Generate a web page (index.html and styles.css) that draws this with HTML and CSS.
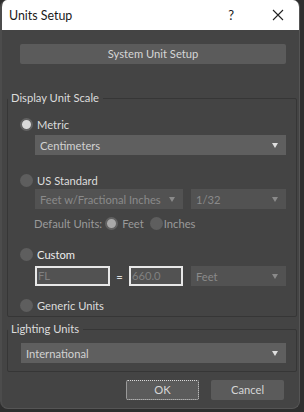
FILE: index.html
```html
<!DOCTYPE html>
<html>
<head>
<meta charset="utf-8">
<link rel="stylesheet" href="styles.css">
</head>
<body>
<div class="window">
  <div class="titlebar">
    <span class="title">Units Setup</span>
    <span class="help">?</span>
    <svg class="close" width="12" height="12" viewBox="0 0 12 12"><path d="M1 1 L11 11 M11 1 L1 11" stroke="#222" stroke-width="1.1" fill="none"/></svg>
  </div>
  <div class="content">
    <div class="sysrow"><div class="btn sysbtn">System Unit Setup</div></div>

    <fieldset class="group display">
      <legend>Display Unit Scale</legend>
      <div class="radiorow r-metric"><span class="radio on"></span><span class="rlabel">Metric</span></div>
      <div class="indent"><div class="combo wide cm"><span>Centimeters</span><i class="arrow"></i></div></div>

      <div class="radiorow r-us"><span class="radio"></span><span class="rlabel">US Standard</span></div>
      <div class="indent combos">
        <div class="combo dis feetfrac"><span>Feet w/Fractional Inches</span><i class="arrow"></i></div>
        <div class="combo dis frac"><span>1/32</span><i class="arrow"></i></div>
      </div>
      <div class="defunits">
        <span class="dlabel">Default Units:</span>
        <span class="radio on dim"></span><span class="dopt feetopt">Feet</span>
        <span class="radio"></span><span class="dopt inchopt">Inches</span>
      </div>

      <div class="radiorow r-custom"><span class="radio"></span><span class="rlabel bright">Custom</span></div>
      <div class="indent customrow">
        <div class="field fl">FL</div>
        <span class="eq">=</span>
        <div class="field val">660.0</div>
        <div class="combo dis feet"><span>Feet</span><i class="arrow"></i></div>
      </div>

      <div class="radiorow r-generic"><span class="radio"></span><span class="rlabel">Generic Units</span></div>
    </fieldset>

    <fieldset class="group lighting">
      <legend>Lighting Units</legend>
      <div class="combo wide light"><span>International</span><i class="arrow"></i></div>
    </fieldset>

    <div class="buttons">
      <div class="btn ok">OK</div>
      <div class="btn cancel">Cancel</div>
    </div>
  </div>
</div>
</body>
</html>
```

FILE: styles.css
```css
html, body {
  margin: 0;
  padding: 0;
}
body {
  width: 304px;
  height: 412px;
  background: #2e2e2e;
  font-family: Lato, "Noto Sans", sans-serif;
  font-size: 11.2px;
  overflow: hidden;
}
.window {
  width: 300px;
  height: 409px;
  background: #444444;
  border-radius: 7px 7px 8px 8px;
  overflow: hidden;
  box-sizing: border-box;
  border-left: 2px solid #4c4c4c;
  border-right: 1px solid #555;
  border-bottom: 1px solid #555;
}
.titlebar {
  height: 30px;
  background: #ffffff;
  display: flex;
  align-items: center;
  color: #1a1a1a;
  margin-left: -2px;
  margin-right: -1px;
}
.title {
  font-size: 12.4px;
  margin-left: 9px;
  flex: 1;
}
.help {
  font-size: 13px;
  margin-right: 38px;
}
.close {
  margin-right: 16px;
}
.content {
  display: flex;
  flex-direction: column;
}
.sysrow {
  padding: 14px 13px 0 18px;
}
.btn {
  background: #5b5b5b;
  color: #d6d6d6;
  text-align: center;
  height: 20px;
  line-height: 20px;
  border-radius: 2px;
  box-sizing: border-box;
}
.group {
  margin: 0 2px 0 5px;
  border: 1px solid #363636;
  border-radius: 2px;
  padding: 0 10px 0 12px;
  min-width: 0;
  box-sizing: border-box;
}
.group legend {
  color: #dcdcdc;
  padding: 0 4px 0 3px;
  margin-left: -12px;
  line-height: 14px;
  height: 14px;
}
.display {
  margin-top: 27px;
  padding-bottom: 2px;
}
.radiorow {
  display: flex;
  align-items: center;
  height: 18px;
  color: #dcdcdc;
}
.radio {
  width: 13px;
  height: 13px;
  border-radius: 50%;
  background: #5e5e5e;
  box-sizing: border-box;
  flex: none;
}
.radio.on {
  background: #d9d9d9;
  border: 2px solid #626262;
}
.radio.on.dim {
  background: #a9a9a9;
}
.rlabel {
  margin-left: 4px;
}
.rlabel.bright {
  color: #ececec;
}
.r-metric { margin-top: 10px; }
.r-us { margin-top: 16px; }
.r-custom { margin-top: 13px; }
.r-generic { margin-top: 10px; }
.indent {
  padding-left: 15px;
}
.combo {
  height: 20px;
  background: #5f5f5f;
  color: #d2d2d2;
  display: flex;
  align-items: center;
  padding: 0 8px 0 5px;
  box-sizing: border-box;
}
.combo.cm {
  margin-top: 2px;
}
.combo span {
  flex: 1;
  white-space: nowrap;
  overflow: hidden;
}
.arrow {
  width: 0;
  height: 0;
  border-left: 3.5px solid transparent;
  border-right: 3.5px solid transparent;
  border-top: 5px solid #e0e0e0;
}
.combo.dis {
  background: #525252;
  color: #8a8a8a;
}
.combo.dis .arrow {
  border-top-color: #8a8a8a;
}
.combos {
  display: flex;
  gap: 8px;
}
.feetfrac { width: 148px; flex: none; }
.frac { flex: 1; }
.defunits {
  display: flex;
  align-items: center;
  height: 18px;
  margin-top: 5px;
  padding-left: 14px;
  color: #9a9a9a;
}
.dlabel { margin-right: 3px; }
.dopt { margin-left: 4px; }
.feetopt { margin-right: 6px; }
.inchopt { margin-left: 1px; }
.customrow {
  display: flex;
  align-items: center;
  margin-top: 3px;
}
.field {
  height: 20px;
  border: 2px solid #e8e8e8;
  background: #525252;
  color: #808080;
  box-sizing: border-box;
  line-height: 16px;
  padding-left: 1px;
  flex: none;
}
.fl { width: 75px; }
.val { width: 54px; }
.eq {
  color: #e0e0e0;
  width: 19px;
  text-align: center;
}
.feet {
  flex: 1;
  margin-left: 8px;
}
.lighting {
  margin-top: 5px;
  padding-bottom: 8px;
}
.combo.light {
  margin-top: 7px;
  margin-left: 1px;
}
.buttons {
  display: flex;
  justify-content: flex-end;
  gap: 12px;
  padding: 8px 15px 0 0;
}
.buttons .btn {
  width: 73px;
}
.ok {
  border: 1px dotted #d8d8d8;
  line-height: 18px;
}
```
